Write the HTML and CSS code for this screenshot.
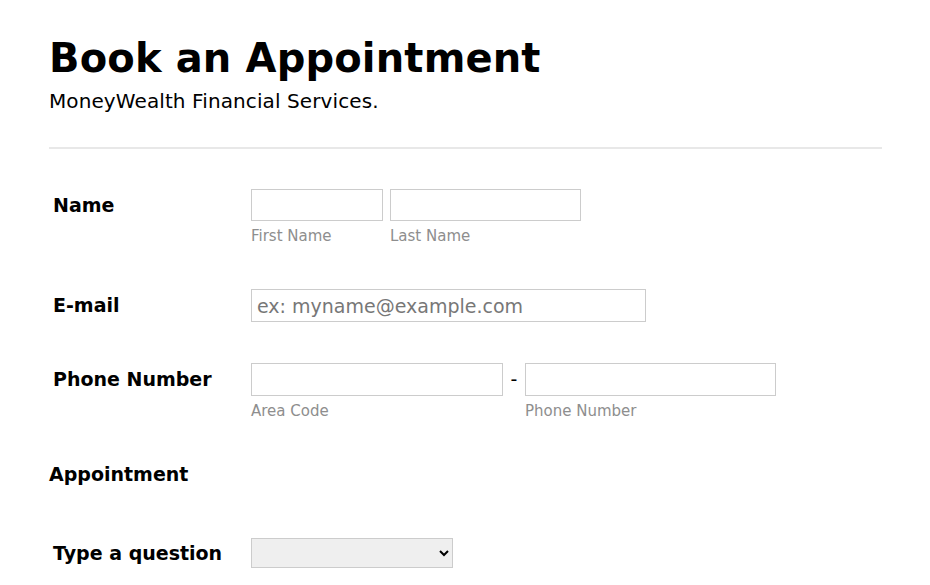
FILE: index.html
```html
<!DOCTYPE html>
<html lang="en">
<head>
<meta charset="utf-8">
<title>Book an Appointment</title>
<link rel="stylesheet" href="styles.css">
</head>
<body>
<div class="page">
  <header class="header">
    <h1 class="title">Book an Appointment</h1>
    <p class="subtitle">MoneyWealth Financial Services.</p>
  </header>
  <hr class="divider">
  <form class="form">
    <div class="field field-name">
      <label class="label">Name</label>
      <div class="controls">
        <div class="sub-group">
          <input class="input w-first" type="text">
          <span class="sublabel">First Name</span>
        </div>
        <div class="sub-group">
          <input class="input w-last" type="text">
          <span class="sublabel">Last Name</span>
        </div>
      </div>
    </div>
    <div class="field field-email">
      <label class="label">E-mail</label>
      <div class="controls">
        <input class="input w-email" type="text" placeholder="ex: myname@example.com">
      </div>
    </div>
    <div class="field field-phone">
      <label class="label">Phone Number</label>
      <div class="controls">
        <div class="sub-group">
          <input class="input w-area" type="text">
          <span class="sublabel">Area Code</span>
        </div>
        <span class="dash">-</span>
        <div class="sub-group">
          <input class="input w-phone" type="text">
          <span class="sublabel">Phone Number</span>
        </div>
      </div>
    </div>
    <h2 class="section">Appointment</h2>
    <div class="field field-question">
      <label class="label">Type a question</label>
      <div class="controls">
        <select class="select"><option></option></select>
      </div>
    </div>
  </form>
</div>
</body>
</html>
```
FILE: styles.css
```css
html, body {
  margin: 0;
  padding: 0;
  background: #fff;
}
body {
  font-family: "DejaVu Sans", Verdana, sans-serif;
  color: #000;
}
.page {
  padding: 34px 48px 0 49px;
}
.title {
  margin: 0;
  font-size: 40px;
  line-height: 48px;
  font-weight: bold;
  letter-spacing: 0.15px;
}
.subtitle {
  margin: 7px 0 0;
  font-size: 20px;
  line-height: 24px;
  letter-spacing: 0.1px;
}
.divider {
  margin: 34px 0 0;
  border: 0;
  border-top: 2px solid #e8e8e8;
  height: 0;
}
.form {
  display: flex;
  flex-direction: column;
  padding-top: 40px;
}
.field {
  display: flex;
  align-items: flex-start;
  padding-left: 4px;
}
.label {
  width: 198px;
  font-size: 19px;
  font-weight: bold;
  line-height: 32px;
}
.controls {
  display: flex;
  align-items: flex-start;
  gap: 7px;
}
.sub-group {
  display: flex;
  flex-direction: column;
}
.input {
  box-sizing: border-box;
  height: 32px;
  margin: 0;
  padding: 0 5px;
  border: 1px solid #cccccc;
  border-radius: 0;
  background: #fff;
  font-family: "DejaVu Sans", Verdana, sans-serif;
  font-size: 19px;
  color: #333;
  outline: none;
}
.input::placeholder {
  color: #777;
}
.sublabel {
  margin-top: 6px;
  font-size: 15px;
  line-height: 18px;
  color: #8e8e8e;
}
.w-first { width: 132px; }
.w-last { width: 191px; }
.w-email { width: 395px; height: 33px; }
.w-area { width: 252px; height: 33px; }
.w-phone { width: 251px; height: 33px; }
.field-phone .controls { gap: 0; }
.dash {
  width: 22px;
  text-align: center;
  font-size: 19px;
  line-height: 33px;
}
.field-name { margin-bottom: 44px; }
.field-email { margin-bottom: 41px; }
.section {
  margin: 42px 0 0;
  font-size: 19px;
  font-weight: bold;
  line-height: 24px;
}
.field-question {
  margin-top: 52px;
}
.field-question .label { line-height: 30px; }
.select {
  box-sizing: border-box;
  width: 202px;
  height: 30px;
  margin: 0;
  border: 1px solid #cccccc;
  border-radius: 0;
  background: #efefef;
  font-family: "DejaVu Sans", Verdana, sans-serif;
  font-size: 15px;
}
```
